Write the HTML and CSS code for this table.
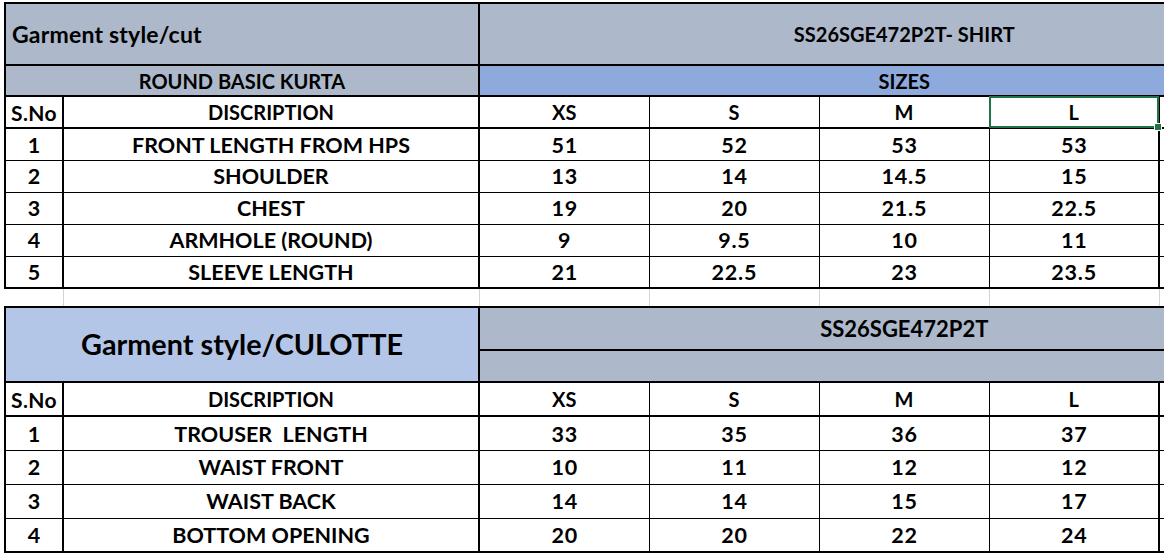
FILE: index.html
```html
<!DOCTYPE html>
<html>
<head>
<meta charset="utf-8">
<title>Garment size chart</title>
<link rel="stylesheet" href="styles.css">
</head>
<body>
<div class="sheet">
<table class="grid">
  <colgroup>
    <col class="c-no"><col class="c-desc"><col class="c-size"><col class="c-size"><col class="c-size"><col class="c-size"><col class="c-extra">
  </colgroup>
  <tr class="r-title thick-top thick-bottom">
    <td colspan="2" class="gray title-left edge-left">Garment style/cut</td>
    <td colspan="5" class="gray code thick-left">SS26SGE472P2T- SHIRT</td>
  </tr>
  <tr class="r-sub thick-bottom">
    <td colspan="2" class="gray edge-left">ROUND BASIC KURTA</td>
    <td colspan="5" class="blue thick-left">SIZES</td>
  </tr>
  <tr class="r-row thick-bottom">
    <td class="edge-left thick-right sno">S.No</td><td class="thick-right">DISCRIPTION</td><td>XS</td><td>S</td><td>M</td><td class="selected last">L</td><td class="extra"></td>
  </tr>
  <tr class="r-row data">
    <td class="edge-left thick-right">1</td><td class="thick-right">FRONT LENGTH FROM HPS</td><td>51</td><td>52</td><td>53</td><td class="last">53</td><td class="extra"></td>
  </tr>
  <tr class="r-row data">
    <td class="edge-left thick-right">2</td><td class="thick-right">SHOULDER</td><td>13</td><td>14</td><td>14.5</td><td class="last">15</td><td class="extra"></td>
  </tr>
  <tr class="r-row data">
    <td class="edge-left thick-right">3</td><td class="thick-right">CHEST</td><td>19</td><td>20</td><td>21.5</td><td class="last">22.5</td><td class="extra"></td>
  </tr>
  <tr class="r-row data">
    <td class="edge-left thick-right">4</td><td class="thick-right">ARMHOLE (ROUND)</td><td>9</td><td>9.5</td><td>10</td><td class="last">11</td><td class="extra"></td>
  </tr>
  <tr class="r-row data thick-bottom">
    <td class="edge-left thick-right">5</td><td class="thick-right">SLEEVE LENGTH</td><td>21</td><td>22.5</td><td>23</td><td class="last">23.5</td><td class="extra"></td>
  </tr>
  <tr class="r-gap">
    <td class="gap first"></td><td class="gap"></td><td class="gap"></td><td class="gap"></td><td class="gap"></td><td class="gap"></td><td class="gap extra"></td>
  </tr>
  <tr class="r-title2a thick-top">
    <td colspan="2" rowspan="2" class="lightblue big edge-left thick-bottom">Garment style/CULOTTE</td>
    <td colspan="5" class="gray thick-left split code2">SS26SGE472P2T</td>
  </tr>
  <tr class="r-title2b thick-bottom">
    <td colspan="5" class="gray thick-left"></td>
  </tr>
  <tr class="r-row2 thick-bottom">
    <td class="edge-left thick-right sno">S.No</td><td class="thick-right">DISCRIPTION</td><td>XS</td><td>S</td><td>M</td><td class="last">L</td><td class="extra"></td>
  </tr>
  <tr class="r-row2 data">
    <td class="edge-left thick-right">1</td><td class="thick-right">TROUSER&nbsp; LENGTH</td><td>33</td><td>35</td><td>36</td><td class="last">37</td><td class="extra"></td>
  </tr>
  <tr class="r-row2 data">
    <td class="edge-left thick-right">2</td><td class="thick-right">WAIST FRONT</td><td>10</td><td>11</td><td>12</td><td class="last">12</td><td class="extra"></td>
  </tr>
  <tr class="r-row2 data">
    <td class="edge-left thick-right">3</td><td class="thick-right">WAIST BACK</td><td>14</td><td>14</td><td>15</td><td class="last">17</td><td class="extra"></td>
  </tr>
  <tr class="r-row2 data thick-bottom">
    <td class="edge-left thick-right">4</td><td class="thick-right">BOTTOM OPENING</td><td>20</td><td>20</td><td>22</td><td class="last">24</td><td class="extra"></td>
  </tr>
</table>
</div>
</body>
</html>
```

FILE: styles.css
```css
html, body {
  margin: 0;
  padding: 0;
}

body {
  width: 1164px;
  height: 556px;
  overflow: hidden;
  background: #ffffff;
  font-family: Lato, "Liberation Sans", sans-serif;
  font-weight: 700;
  color: #000000;
}

.sheet {
  width: 1164px;
  height: 556px;
  overflow: hidden;
  padding: 2px 0 0 4px;
  box-sizing: border-box;
}

.grid {
  border-collapse: collapse;
  table-layout: fixed;
  width: 1324px;
}

.c-no { width: 58px; }
.c-desc { width: 416px; }
.c-size { width: 170px; }
.c-extra { width: 170px; }

.grid td {
  border: 1px solid #000000;
  padding: 0;
  text-align: center;
  vertical-align: middle;
  font-size: 20px;
  line-height: 1;
  white-space: nowrap;
}

.grid td.sno {
  font-size: 21px;
  letter-spacing: 0.4px;
}

.grid .data td {
  font-size: 21.5px;
  padding-top: 2px;
}

.grid .data td:nth-child(1),
.grid .data td:nth-child(n+3) {
  font-size: 21.5px;
  letter-spacing: 0.8px;
  text-indent: 0.8px;
}

.thick-top td { border-top-width: 2px; }
.thick-bottom td, .grid td.thick-bottom { border-bottom-width: 2px; }
.grid td.edge-left { border-left-width: 2px; }
.grid td.thick-left { border-left-width: 2px; }
.grid td.thick-right { border-right-width: 2px; }
.grid td.last { border-right-width: 2px; }
.grid td.extra { border-right: none; }

.r-title { height: 62px; }
.r-sub { height: 31px; }
.r-row { height: 32px; }
.r-gap { height: 19px; }
.r-title2a { height: 43px; }
.r-title2b { height: 32px; }
.r-row2 { height: 34px; }

.gray { background: #adb9ca; }
.blue { background: #8ea9db; }
.lightblue { background: #b4c6e7; }

.grid td.title-left {
  text-align: left;
  padding-left: 6px;
  font-size: 23px;
  letter-spacing: 0.2px;
}

.grid td.code {
  font-size: 20px;
}

.grid td.code2 {
  font-size: 22px;
}

.grid td.big {
  font-size: 28.8px;
}

.grid td.split {
  border-bottom-width: 2px;
}

.grid td.gap {
  border-left: 1px solid #d4d4d4;
  border-right: 1px solid #d4d4d4;
}

.grid td.gap.first {
  border-left: none;
}

.grid td.selected {
  position: relative;
}

.grid td.selected::after {
  content: "";
  position: absolute;
  left: -1px;
  top: -1px;
  right: -1px;
  bottom: -1px;
  border: 2px solid #217346;
  pointer-events: none;
}

.grid td.selected::before {
  content: "";
  position: absolute;
  right: -4px;
  bottom: -4px;
  width: 6px;
  height: 6px;
  background: #217346;
  border: 1px solid #ffffff;
  z-index: 1;
}
```
